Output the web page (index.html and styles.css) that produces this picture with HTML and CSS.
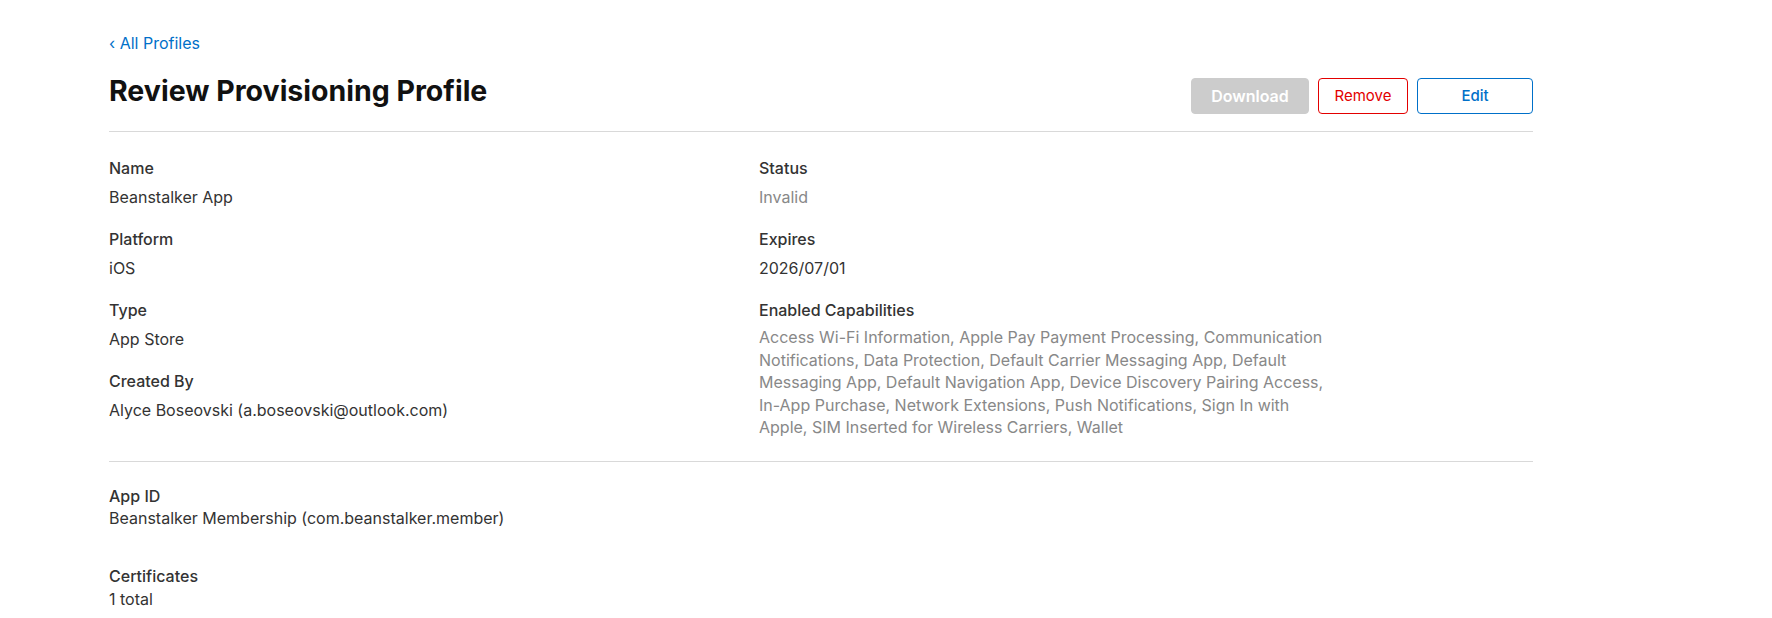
FILE: index.html
```html
<!DOCTYPE html>
<html lang="en">
<head>
<meta charset="utf-8">
<title>Review Provisioning Profile</title>
<link rel="stylesheet" href="styles.css">
</head>
<body>
<main class="page">
  <a class="back-link" href="#"><span class="chev">‹</span> All Profiles</a>
  <header class="page-header">
    <h1 class="page-title">Review Provisioning Profile</h1>
    <div class="actions">
      <button class="btn btn-download" type="button">Download</button>
      <button class="btn btn-remove" type="button">Remove</button>
      <button class="btn btn-edit" type="button">Edit</button>
    </div>
  </header>

  <section class="details">
    <div class="col">
      <div class="field">
        <div class="label">Name</div>
        <div class="value">Beanstalker App</div>
      </div>
      <div class="field">
        <div class="label">Platform</div>
        <div class="value">iOS</div>
      </div>
      <div class="field">
        <div class="label">Type</div>
        <div class="value">App Store</div>
      </div>
      <div class="field">
        <div class="label">Created By</div>
        <div class="value">Alyce Boseovski (a.boseovski@outlook.com)</div>
      </div>
    </div>
    <div class="col col-right">
      <div class="field">
        <div class="label">Status</div>
        <div class="value muted">Invalid</div>
      </div>
      <div class="field">
        <div class="label">Expires</div>
        <div class="value">2026/07/01</div>
      </div>
      <div class="field">
        <div class="label">Enabled Capabilities</div>
        <div class="value muted caps">Access Wi-Fi Information, Apple Pay Payment Processing, Communication Notifications, Data Protection, Default Carrier Messaging App, Default Messaging App, Default Navigation App, Device Discovery Pairing Access, In-App Purchase, Network Extensions, Push Notifications, Sign In with Apple, SIM Inserted for Wireless Carriers, Wallet</div>
      </div>
    </div>
  </section>

  <section class="extra">
    <div class="field-tight">
      <div class="label">App ID</div>
      <div class="value">Beanstalker Membership (com.beanstalker.member)</div>
    </div>
    <div class="field-tight">
      <div class="label">Certificates</div>
      <div class="value">1 total</div>
    </div>
  </section>
</main>
</body>
</html>
```

FILE: styles.css
```css
* { box-sizing: border-box; }

html, body {
  margin: 0;
  padding: 0;
  background: #fff;
}

body {
  font-family: Inter, "Noto Sans", "Liberation Sans", sans-serif;
  font-size: 16px;
  line-height: 20px;
  color: #333;
}

.page {
  width: 1424px;
  margin-left: 109px;
  padding-top: 33px;
  display: flex;
  flex-direction: column;
}

.back-link {
  align-self: flex-start;
  color: #0070c9;
  text-decoration: none;
  font-size: 16px;
  line-height: 20px;
}

.page-header {
  display: flex;
  justify-content: space-between;
  align-items: flex-start;
  margin-top: 21px;
  padding-bottom: 17px;
  border-bottom: 1px solid #d9d9d9;
}

.page-title {
  margin: 0;
  font-size: 28.5px;
  line-height: 34px;
  font-weight: 700;
  color: #111;
}

.actions {
  display: flex;
  gap: 9px;
  margin-top: 4px;
}

.btn {
  height: 36px;
  border-radius: 4px;
  font-family: inherit;
  font-size: 15px;
  line-height: 20px;
  padding: 0;
  background: #fff;
  cursor: pointer;
}

.btn-download {
  width: 118px;
  background: #cccccc;
  border: 1px solid #cccccc;
  color: #fff;
  font-size: 16px;
  font-weight: 600;
}

.btn-remove {
  width: 90px;
  border: 1px solid #e30000;
  color: #e30000;
  font-weight: 400;
}

.btn-edit {
  width: 116px;
  border: 1px solid #0070c9;
  color: #0070c9;
  font-weight: 500;
}

.details {
  display: grid;
  grid-template-columns: 650px 570px;
  padding-top: 26px;
  padding-bottom: 0;
  border-bottom: 1px solid #d9d9d9;
}

.col {
  display: flex;
  flex-direction: column;
}

.field {
  display: flex;
  flex-direction: column;
  gap: 9px;
  margin-bottom: 22px;
}

.label {
  font-weight: 500;
  color: #333;
}

.value {
  color: #333;
}

.muted {
  color: #888;
}

.caps {
  line-height: 22.5px;
  margin-top: -3px;
}

.extra {
  display: flex;
  flex-direction: column;
  gap: 38px;
  padding-top: 24px;
}

.field-tight {
  display: flex;
  flex-direction: column;
  gap: 2px;
}

.field-tight + .field-tight {
  gap: 3px;
}
```
